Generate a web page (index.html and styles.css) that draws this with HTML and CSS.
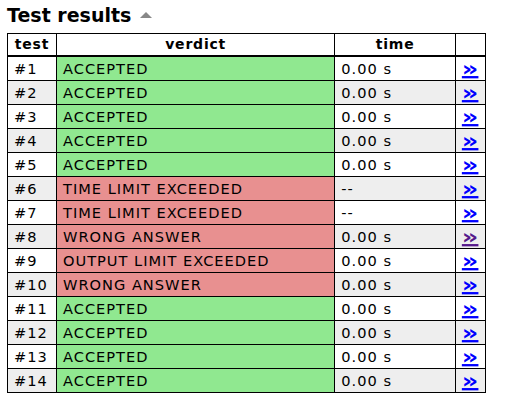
FILE: index.html
```html
<!DOCTYPE html>
<html>
<head>
<meta charset="utf-8">
<link rel="stylesheet" href="styles.css">
</head>
<body>
<h2 class="title">Test results <span class="tri"></span></h2>
<table class="results">
<thead>
<tr><th class="c-test">test</th><th class="c-verdict">verdict</th><th class="c-time">time</th><th class="c-link"></th></tr>
</thead>
<tbody>
<tr><td>#1</td><td class="ok">ACCEPTED</td><td>0.00 s</td><td class="lk"><a href="#">»</a></td></tr>
<tr class="alt"><td>#2</td><td class="ok">ACCEPTED</td><td>0.00 s</td><td class="lk"><a href="#">»</a></td></tr>
<tr><td>#3</td><td class="ok">ACCEPTED</td><td>0.00 s</td><td class="lk"><a href="#">»</a></td></tr>
<tr class="alt"><td>#4</td><td class="ok">ACCEPTED</td><td>0.00 s</td><td class="lk"><a href="#">»</a></td></tr>
<tr><td>#5</td><td class="ok">ACCEPTED</td><td>0.00 s</td><td class="lk"><a href="#">»</a></td></tr>
<tr class="alt"><td>#6</td><td class="bad">TIME LIMIT EXCEEDED</td><td>--</td><td class="lk"><a href="#">»</a></td></tr>
<tr><td>#7</td><td class="bad">TIME LIMIT EXCEEDED</td><td>--</td><td class="lk"><a href="#">»</a></td></tr>
<tr class="alt"><td>#8</td><td class="bad">WRONG ANSWER</td><td>0.00 s</td><td class="lk"><a href="#" class="visited">»</a></td></tr>
<tr><td>#9</td><td class="bad">OUTPUT LIMIT EXCEEDED</td><td>0.00 s</td><td class="lk"><a href="#">»</a></td></tr>
<tr class="alt"><td>#10</td><td class="bad">WRONG ANSWER</td><td>0.00 s</td><td class="lk"><a href="#">»</a></td></tr>
<tr><td>#11</td><td class="ok">ACCEPTED</td><td>0.00 s</td><td class="lk"><a href="#">»</a></td></tr>
<tr class="alt"><td>#12</td><td class="ok">ACCEPTED</td><td>0.00 s</td><td class="lk"><a href="#">»</a></td></tr>
<tr><td>#13</td><td class="ok">ACCEPTED</td><td>0.00 s</td><td class="lk"><a href="#">»</a></td></tr>
<tr class="alt"><td>#14</td><td class="ok">ACCEPTED</td><td>0.00 s</td><td class="lk"><a href="#">»</a></td></tr>
</tbody>
</table>
</body>
</html>
```
FILE: styles.css
```css
body {
  margin: 0;
  padding: 3px 7px;
  font-family: "DejaVu Sans", Verdana, sans-serif;
  color: #000;
  background: #fff;
}
.title {
  margin: 0 0 6px 0;
  font-size: 19px;
  font-weight: bold;
  line-height: 24px;
  height: 24px;
}
.tri {
  display: inline-block;
  width: 0;
  height: 0;
  border-left: 6px solid transparent;
  border-right: 6px solid transparent;
  border-bottom: 6px solid #888;
  vertical-align: 4px;
  margin-left: 2px;
}
.results {
  border-collapse: collapse;
  font-size: 14.6px;
  width: 479px;
}
.results th, .results td {
  border: 1px solid #000;
  text-align: left;
  letter-spacing: 1px;
}
.results td {
  padding: 1px 0 0 6px;
  height: 22px;
  line-height: 22px;
}
.results th {
  text-align: center;
  font-weight: bold;
  font-size: 14px;
  height: 21px;
  line-height: 21px;
  letter-spacing: 0.8px;
  padding: 0;
  border-bottom: 2px solid #000;
}
.c-test { width: 48px; }
.c-verdict { width: 278px; }
.c-time { width: 120px; }
.c-link { width: 29px; }
.results tr.alt td { background: #eee; }
.results td.ok, .results tr.alt td.ok { background: #90e890; }
.results td.bad, .results tr.alt td.bad { background: #e89090; }
.results td.lk { text-align: center; padding: 1px 0 0 0; letter-spacing: 0; }
.lk a {
  display: inline-block;
  color: #00f;
  font-weight: bold;
  font-size: 19px;
  line-height: 16px;
  height: 16px;
  vertical-align: -1px;
  text-decoration: underline;
  text-decoration-thickness: 2px;
  text-underline-offset: 0px;
  transform: scale(1.35, 1.15);
}
.lk a.visited { color: #551a8b; }
```
